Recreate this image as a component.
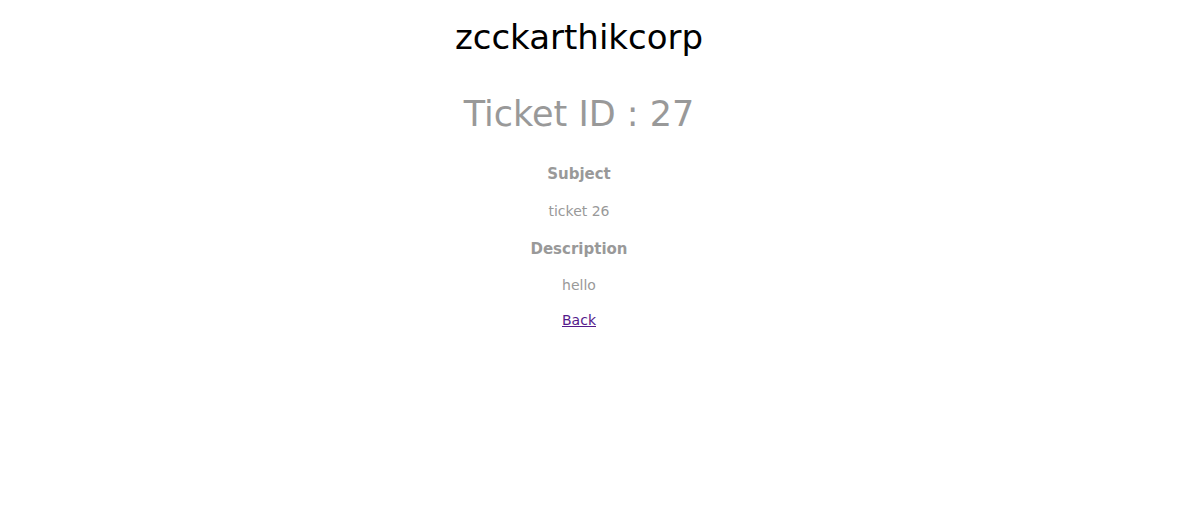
import React from 'react';

const App = () => {
  return (
    <div className="w-[1158px] text-center font-['DejaVu_Sans',sans-serif]">
      <h1 className="pt-[17px] text-[34px] leading-[40px] text-black">zcckarthikcorp</h1>
      <h2 className="mt-[33px] text-[35px] leading-[48px] text-[#999999]">Ticket ID : 27</h2>
      <div className="mt-[25px] text-[#999999]">
        <h3 className="text-[15px] leading-[22px] font-bold">Subject</h3>
        <p className="mt-[16px] text-[14px] leading-[20px]">ticket 26</p>
        <h3 className="mt-[17px] text-[15px] leading-[22px] font-bold">Description</h3>
        <p className="mt-[15px] text-[14px] leading-[20px]">hello</p>
      </div>
      <a href="#" className="mt-[15px] inline-block text-[14px] leading-[20px] text-[#551a8b] underline">
        Back
      </a>
    </div>
  );
};

export default App;
